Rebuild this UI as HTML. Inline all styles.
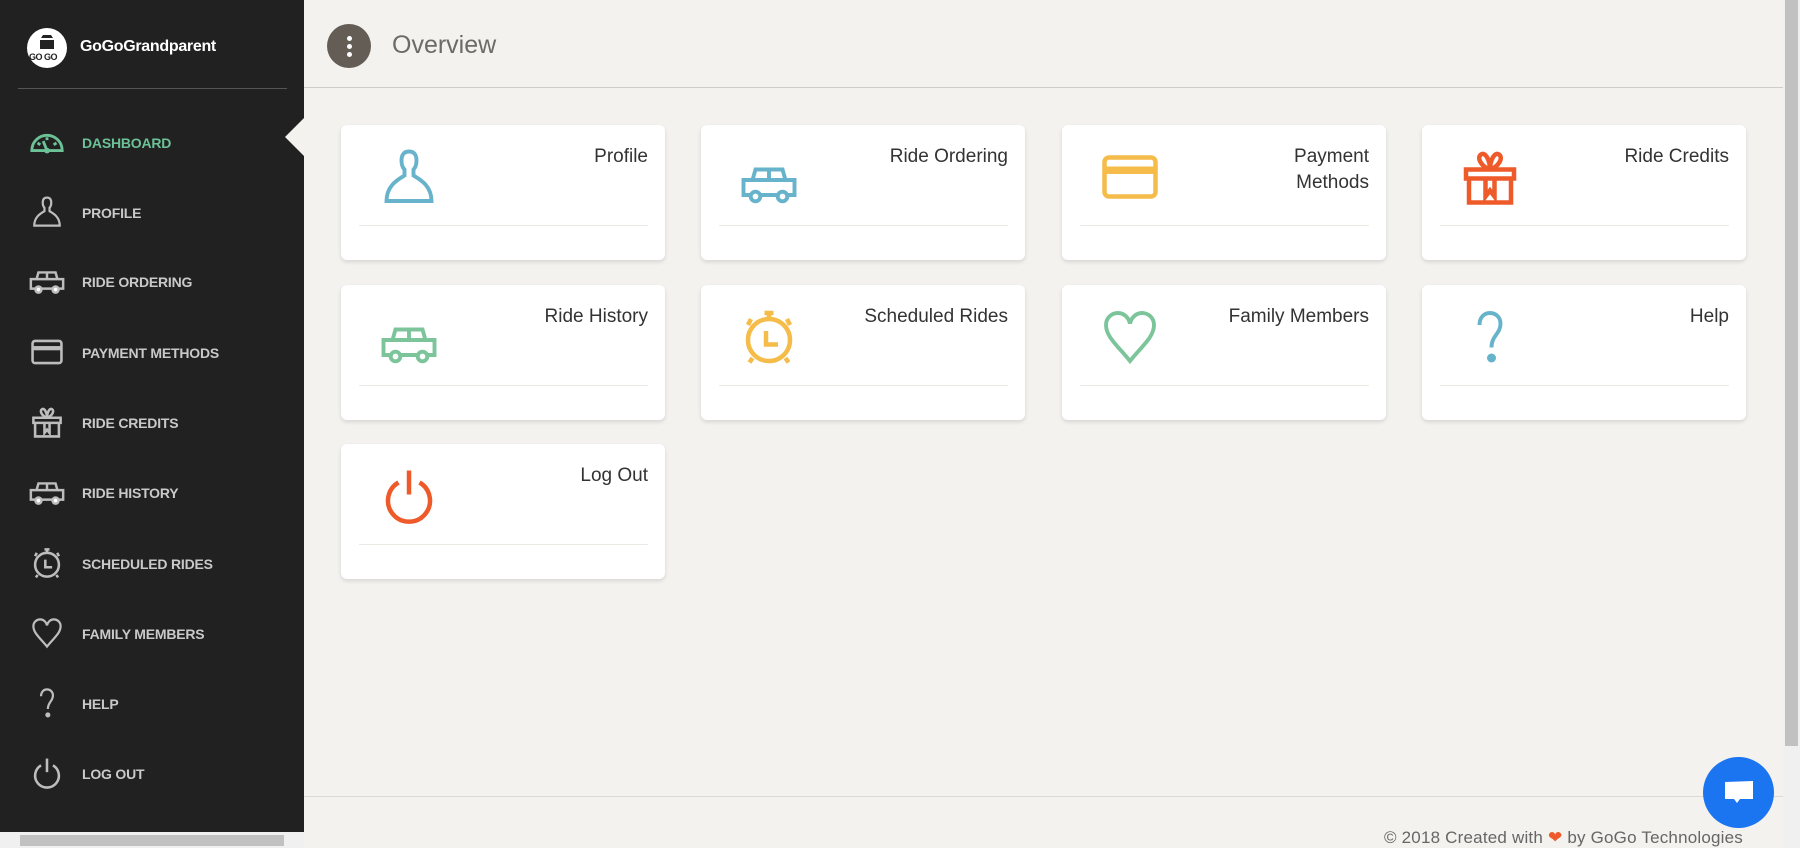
<!DOCTYPE html>
<html><head><meta charset="utf-8"><style>
*{box-sizing:border-box;margin:0;padding:0}
body{width:1800px;height:848px;overflow:hidden;background:#f3f2ef;font-family:"Liberation Sans",sans-serif;position:relative}
.sb{position:absolute;left:0;top:0;width:304px;height:832px;background:#212121}
.logo{position:absolute;left:27px;top:28px;width:40px;height:40px;border-radius:50%;background:#fff}
.logo span{position:absolute;left:2px;top:24px;font-size:9px;font-weight:bold;color:#222;letter-spacing:-0.5px}
.brand{position:absolute;left:80px;top:38px;color:#fff;font-weight:bold;font-size:16px;letter-spacing:-0.3px}
.sep{position:absolute;left:18px;top:88px;width:269px;height:1px;background:#555}
.mi{position:absolute;left:0;width:304px;height:30px}
.mi svg{position:absolute;left:28px;top:-2px;width:38px;height:34px;color:#bdbdbd}
.mi b{position:absolute;left:82px;top:8px;font-size:14px;color:#c9c9c9;letter-spacing:-0.2px}
.mi.act svg{color:#6cc197}.mi.act b{color:#6cc197}
.notch{position:absolute;left:285px;top:118px;width:0;height:0;border-top:19px solid transparent;border-bottom:19px solid transparent;border-right:19px solid #f3f2ef}
.hbar{position:absolute;left:0;top:832px;width:304px;height:16px;background:#f0f0f0}
.hbar i{position:absolute;left:20px;top:3px;width:264px;height:11px;background:#c1c1c1}
.vbar{position:absolute;left:1783px;top:0;width:17px;height:848px;background:#f0f0f0}
.vbar i{position:absolute;left:2px;top:0;width:13px;height:746px;background:#c1c1c1}
.menu{position:absolute;left:327px;top:24px;width:44px;height:44px;border-radius:50%;background:#635d55}
.menu i{position:absolute;left:20px;width:5px;height:5px;border-radius:50%;background:#fff}
.title{position:absolute;left:392px;top:31px;font-size:25px;color:#6e6a66}
.hl{position:absolute;left:304px;top:87px;width:1479px;height:1px;background:#cfcdc9}
.card{position:absolute;width:324px;height:135px;background:#fff;border-radius:6px;box-shadow:0 2px 4px rgba(0,0,0,.12)}
.card h3{position:absolute;right:17px;top:19px;font-weight:normal;font-size:19px;color:#333;text-align:right;line-height:26px}
.card .ln{position:absolute;left:18px;right:17px;top:100px;height:1px;background:#ece9e3}
.card svg{position:absolute;left:38px;top:22px;width:60px;height:60px}
.fl{position:absolute;left:304px;top:796px;width:1479px;height:1px;background:#dcdad6}
.ft{position:absolute;right:57px;top:828px;font-size:17px;color:#666;letter-spacing:0.2px}
.chat{position:absolute;left:1703px;top:757px;width:71px;height:71px;border-radius:50%;background:#1b74f0}
</style></head><body>
<svg width="0" height="0" style="position:absolute">
<defs>
<symbol id="car" viewBox="0 0 40 30"><g fill="none" stroke="currentColor" stroke-width="2.6"><path d="M3 13h34v10H3z"/><path d="M9 13l2-7h18l2 7"/><path d="M20 6v7"/><circle cx="11" cy="24" r="3.2" fill="#fff"/><circle cx="29" cy="24" r="3.2" fill="#fff"/></g></symbol>
<symbol id="person" viewBox="0 0 40 40"><path d="M20 3c-4 0-5 3-5 6 0 3 1 5 2 6v4c-3 2-12 6-12 17h30c0-11-9-15-12-17v-4c1-1 2-3 2-6 0-3-1-6-5-6z" fill="none" stroke="currentColor" stroke-width="2.6"/></symbol>
<symbol id="card" viewBox="0 0 40 40"><rect x="3" y="7" width="34" height="26" rx="3" fill="none" stroke="currentColor" stroke-width="3"/><rect x="3" y="13" width="34" height="5" fill="currentColor"/></symbol>
<symbol id="gift" viewBox="0 0 40 40"><g fill="none" stroke="currentColor" stroke-width="3"><path d="M4 15h32v6H4zM6 21h28v16H6z"/><path d="M20 15c-6-2-9-8-6-10s6 4 6 10c0-6 3-12 6-10s0 8-6 10"/><path d="M17 21v12l3-4 3 4V21"/></g></symbol>
<symbol id="clock" viewBox="0 0 40 40"><g fill="none" stroke="currentColor" stroke-width="3"><circle cx="20" cy="22" r="14"/><path d="M17 4h6M20 4v4M18 16v9h8M8 8l-2 4M32 8l2 4M9 34l-2 3M31 34l2 3"/></g></symbol>
<symbol id="heart" viewBox="0 0 40 40"><path d="M20 36C12 26 4 20 4 12c0-5 4-8 8-8s7 3 8 7c1-4 4-7 8-7s8 3 8 8c0 8-8 14-16 24z" fill="none" stroke="currentColor" stroke-width="2.6"/></symbol>
<symbol id="help" viewBox="0 0 40 40"><path d="M13 12c0-5 3-8 7-8s7 3 7 7c0 7-6 8-6 16" fill="none" stroke="currentColor" stroke-width="2.6"/><circle cx="21" cy="34" r="3" fill="currentColor"/></symbol>
<symbol id="power" viewBox="0 0 40 40"><g fill="none" stroke="currentColor" stroke-width="3"><path d="M13 11a14 14 0 1 0 14 0"/><path d="M20 3v16"/></g></symbol>
<symbol id="dash" viewBox="0 0 40 30"><g fill="none" stroke="currentColor" stroke-width="3"><path d="M4 24a16 16 0 0 1 32 0z"/><path d="M20 24l-4-10"/><path d="M10 16l3 2M30 16l-3 2M20 10v3"/></g><circle cx="20" cy="24" r="3" fill="currentColor"/></symbol>
</defs></svg>

<div class="sb">
<div class="logo"><svg width="40" height="26" viewBox="0 0 40 26" style="position:absolute;left:0;top:0"><path d="M14 10h12l-2-3h-8zM13 12h14v9H13z" fill="#222"/></svg><span>GO GO</span></div>
<div class="brand">GoGoGrandparent</div>
<div class="sep"></div>
<div class="mi act" style="top:127px"><svg><use href="#dash"/></svg><b>DASHBOARD</b></div>
<div class="mi" style="top:197px"><svg><use href="#person"/></svg><b>PROFILE</b></div>
<div class="mi" style="top:266px"><svg><use href="#car"/></svg><b>RIDE ORDERING</b></div>
<div class="mi" style="top:337px"><svg><use href="#card"/></svg><b>PAYMENT METHODS</b></div>
<div class="mi" style="top:407px"><svg><use href="#gift"/></svg><b>RIDE CREDITS</b></div>
<div class="mi" style="top:477px"><svg><use href="#car"/></svg><b>RIDE HISTORY</b></div>
<div class="mi" style="top:548px"><svg><use href="#clock"/></svg><b>SCHEDULED RIDES</b></div>
<div class="mi" style="top:618px"><svg><use href="#heart"/></svg><b>FAMILY MEMBERS</b></div>
<div class="mi" style="top:688px"><svg><use href="#help"/></svg><b>HELP</b></div>
<div class="mi" style="top:758px"><svg><use href="#power"/></svg><b>LOG OUT</b></div>
</div>
<div class="notch"></div>
<div class="hbar"><i></i></div>

<div class="menu"><i style="top:12px"></i><i style="top:20px"></i><i style="top:28px"></i></div>
<div class="title">Overview</div>
<div class="hl"></div>

<div class="card" style="left:341px;top:125px"><svg style="color:#67b3cb"><use href="#person"/></svg><h3>Profile</h3><div class="ln"></div></div>
<div class="card" style="left:701px;top:125px"><svg style="color:#67b3cb;top:28px"><use href="#car"/></svg><h3>Ride Ordering</h3><div class="ln"></div></div>
<div class="card" style="left:1062px;top:125px"><svg style="color:#f5bc4a"><use href="#card"/></svg><h3>Payment<br>Methods</h3><div class="ln"></div></div>
<div class="card" style="left:1422px;top:125px"><svg style="color:#ee5a2a"><use href="#gift"/></svg><h3>Ride Credits</h3><div class="ln"></div></div>
<div class="card" style="left:341px;top:285px"><svg style="color:#7cc59b;top:28px"><use href="#car"/></svg><h3>Ride History</h3><div class="ln"></div></div>
<div class="card" style="left:701px;top:285px"><svg style="color:#f5bc4a"><use href="#clock"/></svg><h3>Scheduled Rides</h3><div class="ln"></div></div>
<div class="card" style="left:1062px;top:285px"><svg style="color:#7cc59b"><use href="#heart"/></svg><h3>Family Members</h3><div class="ln"></div></div>
<div class="card" style="left:1422px;top:285px"><svg style="color:#67b3cb"><use href="#help"/></svg><h3>Help</h3><div class="ln"></div></div>
<div class="card" style="left:341px;top:444px"><svg style="color:#ee5a2a"><use href="#power"/></svg><h3>Log Out</h3><div class="ln"></div></div>

<div class="fl"></div>
<div class="ft">© 2018 Created with <span style="color:#ee5a2a">❤</span> by GoGo Technologies</div>
<div class="chat"><svg width="71" height="71" viewBox="0 0 71 71"><path d="M22 25l28-1 0 18-13 0-3 4-3-4-9 0z" fill="#fff"/></svg></div>
<div class="vbar"><i></i></div>
</body></html>
